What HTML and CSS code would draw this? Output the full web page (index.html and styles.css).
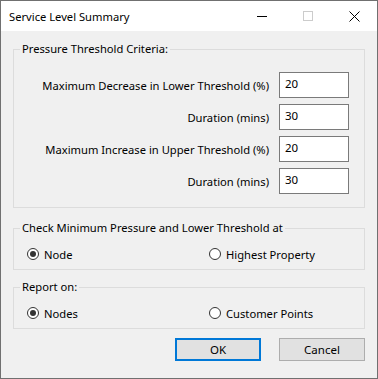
FILE: index.html
```html
<!DOCTYPE html>
<html lang="en">
<head>
  <meta charset="UTF-8" />
  <title>Service Level Summary</title>
  <link rel="stylesheet" href="styles.css">
</head>
<body>
<div class="window">
  <div class="titlebar">
    <span class="title">Service Level Summary</span>
    <div class="controls">
      <span class="ctrl">
        <svg width="10" height="10" viewBox="0 0 10 10"><line x1="0" y1="5.5" x2="10" y2="5.5" stroke="#000" stroke-width="1"/></svg>
      </span>
      <span class="ctrl">
        <svg width="10" height="10" viewBox="0 0 10 10"><rect x="0.5" y="0.5" width="9" height="9" fill="none" stroke="#cccccc" stroke-width="1"/></svg>
      </span>
      <span class="ctrl">
        <svg width="11" height="11" viewBox="0 0 11 11"><path d="M0.5 0.5 L10.5 10.5 M10.5 0.5 L0.5 10.5" stroke="#000" stroke-width="1"/></svg>
      </span>
    </div>
  </div>

  <div class="content">
    <fieldset class="group first">
      <legend>Pressure Threshold Criteria:</legend>
      <div class="rows">
        <label class="row"><span>Maximum Decrease in Lower Threshold (%)</span><input type="text" value="20"></label>
        <label class="row"><span>Duration (mins)</span><input type="text" value="30"></label>
        <label class="row"><span>Maximum Increase in Upper Threshold (%)</span><input type="text" value="20"></label>
        <label class="row"><span>Duration (mins)</span><input type="text" value="30"></label>
      </div>
    </fieldset>

    <fieldset class="group second">
      <legend>Check Minimum Pressure and Lower Threshold at</legend>
      <div class="radios">
        <label class="radio"><input type="radio" name="check" checked>Node</label>
        <label class="radio"><input type="radio" name="check">Highest Property</label>
      </div>
    </fieldset>

    <fieldset class="group third">
      <legend>Report on:</legend>
      <div class="radios">
        <label class="radio"><input type="radio" name="report" checked>Nodes</label>
        <label class="radio"><input type="radio" name="report">Customer Points</label>
      </div>
    </fieldset>

    <div class="buttons">
      <button class="btn default">OK</button>
      <button class="btn">Cancel</button>
    </div>
  </div>
</div>
</body>
</html>
```

FILE: styles.css
```css
html, body {
  margin: 0;
  padding: 0;
}
body {
  font-family: 'Noto Sans', 'Open Sans', sans-serif;
  font-size: 11.2px;
  color: #000;
  background: #f0f0f0;
}
.window {
  box-sizing: border-box;
  width: 378px;
  height: 379px;
  border: 1px solid #707070;
  background: #f0f0f0;
  display: flex;
  flex-direction: column;
}
.titlebar {
  height: 30px;
  background: #ffffff;
  display: flex;
  align-items: center;
}
.title {
  padding-left: 8px;
  font-size: 11.2px;
}
.controls {
  margin-left: auto;
  display: flex;
}
.ctrl {
  width: 46px;
  height: 30px;
  display: flex;
  align-items: center;
  justify-content: center;
}
.content {
  padding: 10px 12px 0 12px;
}
.group {
  margin: 0;
  padding: 0;
  border: 1px solid #dcdcdc;
  min-width: 0;
}
.group legend {
  margin-left: 6px;
  padding: 0 2px;
  line-height: 16px;
}
.second {
  margin-top: 12px;
}
.third {
  margin-top: 9px;
}
.rows {
  display: flex;
  flex-direction: column;
  gap: 6px;
  padding: 15px 15px 13px 0;
}
.row {
  display: flex;
  justify-content: flex-end;
  align-items: center;
  gap: 10px;
}
.row input {
  box-sizing: border-box;
  width: 70px;
  height: 26px;
  margin: 0;
  padding: 0 4px 3px 5px;
  border: 1px solid #7a7a7a;
  background: #fff;
  font: inherit;
  font-size: 11.5px;
  color: #000;
  outline: none;
}
.radios {
  display: grid;
  grid-template-columns: 182px 1fr;
  padding: 10px 0 7px 13px;
}
.radio {
  display: flex;
  align-items: center;
  gap: 5px;
  height: 16px;
}
.radio input {
  appearance: none;
  -webkit-appearance: none;
  box-sizing: border-box;
  width: 12px;
  height: 12px;
  margin: 0;
  border: 1px solid #333;
  border-radius: 50%;
  background: #fff;
  display: grid;
  place-content: center;
}
.radio input:checked::before {
  content: "";
  width: 6px;
  height: 6px;
  border-radius: 50%;
  background: #333;
}
.buttons {
  display: flex;
  justify-content: flex-end;
  gap: 18px;
  margin-top: 9px;
}
.btn {
  box-sizing: border-box;
  width: 86px;
  height: 23px;
  margin: 0;
  padding: 0;
  border: 1px solid #adadad;
  background: #e1e1e1;
  font: inherit;
  font-size: 11.5px;
  color: #000;
}
.btn.default {
  border: 2px solid #0078d7;
}
```
